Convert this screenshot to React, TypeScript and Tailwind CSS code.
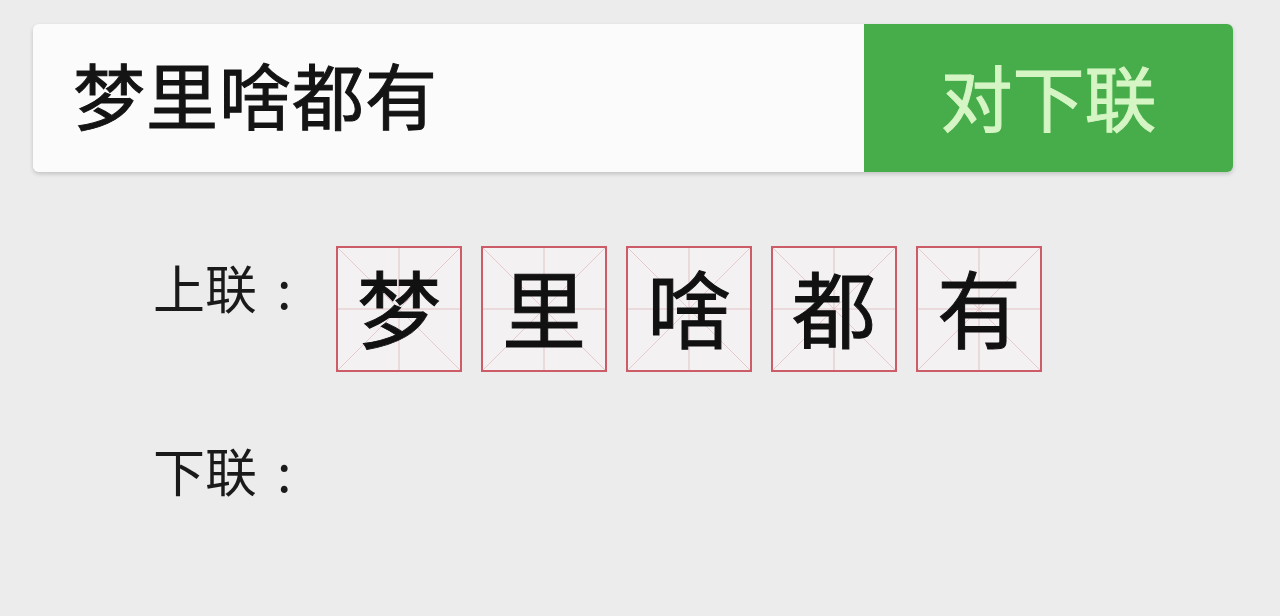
import React from 'react';

const cjk = { fontFamily: '"Noto Sans CJK SC", "Noto Sans", sans-serif' };

const upper = ['梦', '里', '啥', '都', '有'];

// 米字格 box
const GridChar: React.FC<{ ch: string }> = ({ ch }) => (
    <div className="relative w-[126px] h-[126px] border-2 border-[#cc5d68] bg-[#f3f1f1] flex items-center justify-center">
        <svg className="absolute inset-0 w-full h-full" viewBox="0 0 122 122" preserveAspectRatio="none">
            <line x1="0" y1="0" x2="122" y2="122" stroke="#e6c9cc" strokeWidth="1" />
            <line x1="122" y1="0" x2="0" y2="122" stroke="#e6c9cc" strokeWidth="1" />
            <line x1="61" y1="0" x2="61" y2="122" stroke="#e2c3c6" strokeWidth="1" />
            <line x1="0" y1="61" x2="122" y2="61" stroke="#e2c3c6" strokeWidth="1" />
        </svg>
        <span className="relative text-[84px] leading-none [-webkit-text-stroke:1px] text-[#111] -mt-[6px]" style={cjk}>{ch}</span>
    </div>
);

const Label: React.FC<{ text: string }> = ({ text }) => (
    <div className="w-[183px] flex text-[52px] leading-none text-[#1a1a1a]">
        <span>{text}</span>
        <span className="ml-[20px]">:</span>
    </div>
);

const App: React.FC = () => {
    return (
        <div className="w-[1280px] h-[616px] bg-[#ececec] pt-[24px] pl-[33px] overflow-hidden" style={cjk}>
            {/* input + button */}
            <div className="flex w-[1200px] h-[148px] rounded-[6px] shadow-[0_2px_4px_rgba(0,0,0,0.18)] overflow-hidden">
                <div className="flex-1 bg-[#fbfbfc] flex items-center pl-[40px]">
                    <span className="text-[72px] leading-none [-webkit-text-stroke:1px] tracking-[1px] text-[#141414] -mt-[10px]">梦里啥都有</span>
                </div>
                <button className="w-[369px] bg-[#46ad4a] flex items-center justify-center">
                    <span className="text-[72px] leading-none [-webkit-text-stroke:1px] text-[#d6f5c4] -mt-[6px]" style={cjk}>对下联</span>
                </button>
            </div>

            {/* upper line */}
            <div className="flex items-start mt-[74px] ml-[120px]">
                <div className="pt-[15px]">
                    <Label text="上联" />
                </div>
                <div className="flex gap-[19px]">
                    {upper.map((c) => (
                        <GridChar key={c} ch={c} />
                    ))}
                </div>
            </div>

            {/* lower line */}
            <div className="flex items-start mt-[72px] ml-[120px]">
                <Label text="下联" />
            </div>
        </div>
    );
};

export default App;
